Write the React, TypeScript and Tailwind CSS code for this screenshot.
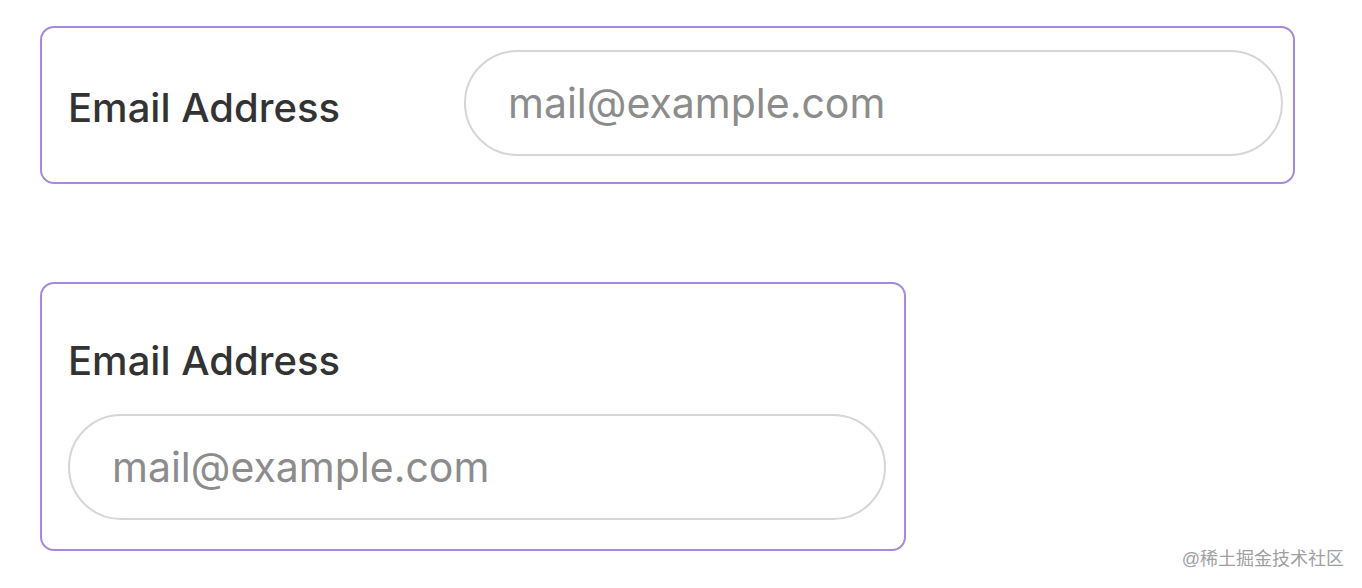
import React from 'react';

const font = { fontFamily: 'Inter, "Liberation Sans", sans-serif' };

function Field({ className }: { className: string }) {
    return (
        <input
            placeholder="mail@example.com"
            className={`${className} h-[106px] rounded-full border-2 border-[#d6d6d6] bg-white text-[41px] text-[#333] outline-none placeholder:text-[#8c8c8c]`}
        />
    );
}

export default function App() {
    return (
        <div className="relative h-[588px] w-[1362px] bg-white" style={font}>
            <div className="pl-[40px] pt-[26px]">
                {/* Inline layout */}
                <div className="flex h-[158px] w-[1255px] items-center rounded-[14px] border-2 border-[#a68ad9] pl-[26px]">
                    <label className="w-[396px] pt-[6px] text-[40px] font-medium text-[#333]">Email Address</label>
                    <Field className="mb-[4px] w-[819px] pl-[42px]" />
                </div>

                {/* Stacked layout */}
                <div className="mt-[98px] flex h-[269px] w-[866px] flex-col rounded-[14px] border-2 border-[#a68ad9] pl-[26px] pt-[54px]">
                    <label className="text-[40px] font-medium leading-[46px] text-[#333]">Email Address</label>
                    <Field className="mt-[30px] w-[818px] pl-[42px]" />
                </div>
            </div>

            <div
                className="absolute bottom-[15px] right-[18px] text-[18px] text-[#a0a0a0]"
                style={{ fontFamily: '"Liberation Sans", "Noto Sans CJK SC", sans-serif' }}
            >
                @稀土掘金技术社区
            </div>
        </div>
    );
}
